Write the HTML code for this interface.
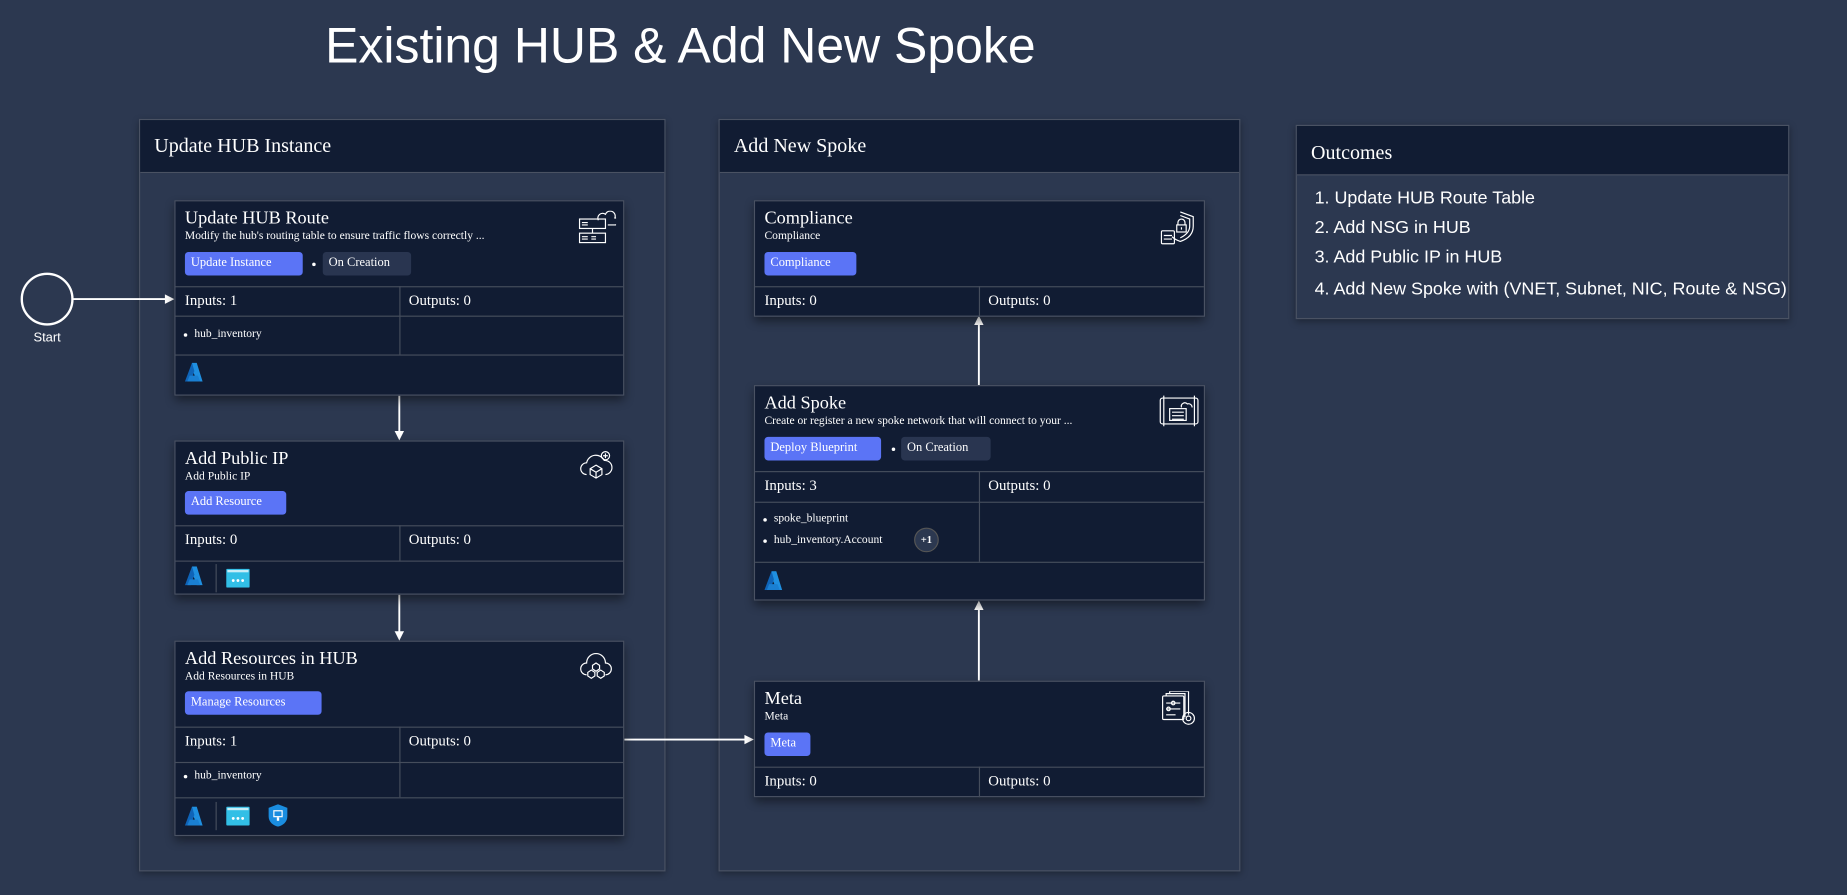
<!DOCTYPE html>
<html><head><meta charset="utf-8"><style>
*{box-sizing:border-box;margin:0;padding:0}
html,body{width:1847px;height:895px;overflow:hidden;background:#2c3850}
#w{position:absolute;left:0;top:0;width:1568px;height:760px;transform:scale(1.17793,1.1776);transform-origin:0 0;font-family:"Liberation Serif",serif;color:#fff}
.abs{position:absolute}
.title{left:276px;top:15px;font:42.4px "Liberation Sans",sans-serif;white-space:nowrap}
.panel{position:absolute;border:1px solid #4a5263;background:#2c3850;box-shadow:0 2px 6px rgba(0,0,0,.35)}
.ph{position:absolute;left:0;right:0;top:0;height:45px;background:#111c33;border-bottom:1px solid #4a5263;font-size:17px;padding:12px 0 0 12px}
.card{position:absolute;background:#111c33;border:1px solid #4a5263;box-shadow:0 4px 8px rgba(0,0,0,.45)}
.ct{position:absolute;left:8px;top:6px;font-size:15.5px;white-space:nowrap}
.cs{position:absolute;left:8px;top:24px;font-size:9.8px;white-space:nowrap}
.btn{position:absolute;height:20px;background:#5b74f6;border-radius:3px;font-size:10.6px;padding:4px 0 0 5px;white-space:nowrap}
.chip{position:absolute;height:20px;background:#293550;border-radius:3px;font-size:10.6px;padding:4px 0 0 5px;white-space:nowrap}
.dot{position:absolute;width:3px;height:3px;border-radius:50%;background:#fff}
.hl{position:absolute;left:0;right:0;height:1px;background:#454d5c}
.vl{position:absolute;width:1px;background:#454d5c}
.lbl{position:absolute;font-size:12.6px;white-space:nowrap}
.li{position:absolute;font-size:9.8px;white-space:nowrap}
.li:before{content:"";position:absolute;left:-9px;top:5px;width:3px;height:3px;border-radius:50%;background:#fff}
.ol{position:absolute;left:1116px;font:15.2px "Liberation Sans",sans-serif;white-space:nowrap}
</style></head><body><div id="w">
<div class="abs title">Existing HUB &amp; Add New Spoke</div>

<div class="panel" style="left:118px;top:101px;width:447px;height:639px"><div class="ph">Update HUB Instance</div></div>
<div class="panel" style="left:610px;top:101px;width:443px;height:639px"><div class="ph">Add New Spoke</div></div>
<div class="panel" style="left:1100px;top:106px;width:419px;height:165px"><div class="ph" style="height:42px;padding-top:13px">Outcomes</div></div>
<div class="ol" style="top:160px">1. Update HUB Route Table</div>
<div class="ol" style="top:185px">2. Add NSG in HUB</div>
<div class="ol" style="top:210px">3. Add Public IP in HUB</div>
<div class="ol" style="top:237px">4. Add New Spoke with (VNET, Subnet, NIC, Route &amp; NSG)</div>

<svg class="abs" style="left:0;top:0" width="1568" height="760">
<circle cx="40" cy="254" r="21.5" fill="none" stroke="#fff" stroke-width="2"/>
<g stroke="#fff" stroke-width="1.6" fill="none">
<line x1="62" y1="254" x2="142" y2="254"/>
<line x1="339" y1="336" x2="339" y2="368"/>
<line x1="339" y1="505" x2="339" y2="538"/>
<line x1="529" y1="628" x2="634" y2="628"/>
<line x1="831" y1="578" x2="831" y2="516"/>
<line x1="831" y1="327" x2="831" y2="274"/>
</g>
<g fill="#fff">
<path d="M148 254 L140 250 L140 258Z"/>
<path d="M339 374 L335 366 L343 366Z"/>
<path d="M339 544 L335 536 L343 536Z"/>
<path d="M640 628 L632 624 L632 632Z"/>
<path d="M831 510 L827 518 L835 518Z"/>
<path d="M831 268 L827 276 L835 276Z"/>
</g>
<text x="40" y="290" fill="#fff" font-family="Liberation Sans,sans-serif" font-size="11" text-anchor="middle">Start</text>
</svg>

<div class="card" style="left:148px;top:170px;width:382px;height:166px">
<div class="ct">Update HUB Route</div><div class="cs">Modify the hub's routing table to ensure traffic flows correctly ...</div>
<div class="btn" style="left:8px;top:43px;width:100px">Update Instance</div>
<div class="dot" style="left:116px;top:52px"></div>
<div class="chip" style="left:125px;top:43px;width:75px">On Creation</div>
<div class="hl" style="top:72px"></div><div class="hl" style="top:97px"></div><div class="hl" style="top:130px"></div>
<div class="vl" style="left:190px;top:72px;height:58px"></div>
<div class="lbl" style="left:8px;top:77px">Inputs: 1</div><div class="lbl" style="left:198px;top:77px">Outputs: 0</div>
<div class="li" style="left:16px;top:107px">hub_inventory</div>
<svg class="abs" style="left:342px;top:8px" width="32" height="30" viewBox="0 0 32 30" fill="none" stroke="#fff" stroke-width="1"><rect x="1" y="7" width="22" height="8"/><rect x="1" y="19" width="22" height="8"/><line x1="12" y1="15" x2="12" y2="19"/><path d="M3 10h5M3 12h5M3 22h5M3 24h5M11 22h4M11 24h4"/><path d="M17 8a4 4 0 0 1 6-5a4 4 0 0 1 8 3a3 3 0 0 1 0 6h-6"/></svg>
<svg class="abs" style="left:8px;top:137px" width="16" height="16" viewBox="0 0 16 16"><path d="M6 0h4L15 16H10L8 10L6 6Z" fill="#1f8fe0"/><path d="M6 0L0 16h5l3-9Z" fill="#0f64b8"/><path d="M4 11h7l2 5H2Z" fill="#1a7fd2"/></svg>
</div>

<div class="card" style="left:148px;top:374px;width:382px;height:131px">
<div class="ct">Add Public IP</div><div class="cs">Add Public IP</div>
<div class="btn" style="left:8px;top:42px;width:86px">Add Resource</div>
<div class="hl" style="top:71px"></div><div class="hl" style="top:101px"></div>
<div class="vl" style="left:190px;top:71px;height:30px"></div>
<div class="lbl" style="left:8px;top:76px">Inputs: 0</div><div class="lbl" style="left:198px;top:76px">Outputs: 0</div>
<svg class="abs" style="left:342px;top:6px" width="30" height="28" viewBox="0 0 30 28" fill="none" stroke="#fff" stroke-width="1"><path d="M7 22a5 5 0 0 1 0-10a8 8 0 0 1 15-2a5 5 0 0 1 1 12"/><circle cx="23" cy="6" r="3.5"/><path d="M23 4v4M21 6h4"/><path d="M15 14l5 3v5l-5 3l-5-3v-5z M10 17l5 3l5-3 M15 20v5"/></svg>
<svg class="abs" style="left:8px;top:106px" width="16" height="16" viewBox="0 0 16 16"><path d="M6 0h4L15 16H10L8 10L6 6Z" fill="#1f8fe0"/><path d="M6 0L0 16h5l3-9Z" fill="#0f64b8"/><path d="M4 11h7l2 5H2Z" fill="#1a7fd2"/></svg>
<div class="vl" style="left:34px;top:104px;height:24px"></div>
<svg class="abs" style="left:43px;top:108px" width="20" height="16" viewBox="0 0 20 16"><rect width="20" height="16" rx="1" fill="#32bfe6"/><rect x="1" y="1" width="18" height="2" fill="#c8eef8"/><circle cx="6" cy="10" r="1.2" fill="#fff"/><circle cx="10" cy="10" r="1.2" fill="#fff"/><circle cx="14" cy="10" r="1.2" fill="#fff"/></svg>
</div>

<div class="card" style="left:148px;top:544px;width:382px;height:166px">
<div class="ct">Add Resources in HUB</div><div class="cs">Add Resources in HUB</div>
<div class="btn" style="left:8px;top:42px;width:116px">Manage Resources</div>
<div class="hl" style="top:72px"></div><div class="hl" style="top:102px"></div><div class="hl" style="top:132px"></div>
<div class="vl" style="left:190px;top:72px;height:60px"></div>
<div class="lbl" style="left:8px;top:77px">Inputs: 1</div><div class="lbl" style="left:198px;top:77px">Outputs: 0</div>
<div class="li" style="left:16px;top:108px">hub_inventory</div>
<svg class="abs" style="left:342px;top:8px" width="30" height="26" viewBox="0 0 30 26" fill="none" stroke="#fff" stroke-width="1"><path d="M7 20a5 5 0 0 1 0-10a8 8 0 0 1 16 0a5 5 0 0 1 0 10"/><path d="M15 10l3 2v3l-3 2l-3-2v-3z M11 16l3 2v3l-3 2l-3-2v-3z M19 16l3 2v3l-3 2l-3-2v-3z"/></svg>
<svg class="abs" style="left:8px;top:140px" width="16" height="16" viewBox="0 0 16 16"><path d="M6 0h4L15 16H10L8 10L6 6Z" fill="#1f8fe0"/><path d="M6 0L0 16h5l3-9Z" fill="#0f64b8"/><path d="M4 11h7l2 5H2Z" fill="#1a7fd2"/></svg>
<div class="vl" style="left:34px;top:136px;height:24px"></div>
<svg class="abs" style="left:43px;top:140px" width="20" height="16" viewBox="0 0 20 16"><rect width="20" height="16" rx="1" fill="#32bfe6"/><rect x="1" y="1" width="18" height="2" fill="#c8eef8"/><circle cx="6" cy="10" r="1.2" fill="#fff"/><circle cx="10" cy="10" r="1.2" fill="#fff"/><circle cx="14" cy="10" r="1.2" fill="#fff"/></svg>
<svg class="abs" style="left:79px;top:138px" width="16" height="19" viewBox="0 0 16 19"><path d="M8 0L16 3v7c0 5-4 8-8 9c-4-1-8-4-8-9V3z" fill="#1a8de0"/><rect x="4" y="5" width="8" height="6" fill="#fff"/><rect x="5" y="6" width="6" height="4" fill="#1a8de0"/><rect x="7" y="11" width="2" height="3" fill="#fff"/></svg>
</div>

<div class="card" style="left:640px;top:170px;width:383px;height:99px">
<div class="ct">Compliance</div><div class="cs">Compliance</div>
<div class="btn" style="left:8px;top:43px;width:78px">Compliance</div>
<div class="hl" style="top:72px"></div>
<div class="vl" style="left:190px;top:72px;height:26px"></div>
<div class="lbl" style="left:8px;top:77px">Inputs: 0</div><div class="lbl" style="left:198px;top:77px">Outputs: 0</div>
<svg class="abs" style="left:343px;top:7px" width="32" height="32" viewBox="0 0 32 32" fill="none" stroke="#fff" stroke-width="1"><path d="M18 2l11 4v8c0 7-5 11-11 13c-3-1-5-2-7-4"/><path d="M18 5l8 3v6c0 5-4 8-8 10"/><rect x="15" y="13" width="8" height="6"/><path d="M16 13v-2a3 3 0 0 1 6 0v2"/><path d="M19 15v2"/><rect x="2" y="18" width="11" height="11" rx="1"/><path d="M4 22h7M4 25h7"/></svg>
</div>

<div class="card" style="left:640px;top:327px;width:383px;height:183px">
<div class="ct">Add Spoke</div><div class="cs">Create or register a new spoke network that will connect to your ...</div>
<div class="btn" style="left:8px;top:43px;width:99px">Deploy Blueprint</div>
<div class="dot" style="left:116px;top:52px"></div>
<div class="chip" style="left:124px;top:43px;width:76px">On Creation</div>
<div class="hl" style="top:72px"></div><div class="hl" style="top:98px"></div><div class="hl" style="top:149px"></div>
<div class="vl" style="left:190px;top:72px;height:77px"></div>
<div class="lbl" style="left:8px;top:77px">Inputs: 3</div><div class="lbl" style="left:198px;top:77px">Outputs: 0</div>
<div class="li" style="left:16px;top:107px">spoke_blueprint</div>
<div class="li" style="left:16px;top:125px">hub_inventory.Account</div>
<div class="abs" style="left:135px;top:120px;width:21px;height:21px;border-radius:50%;background:#2c3850;border:1px solid #555;font-size:9px;font-weight:bold;text-align:center;line-height:19px">+1</div>
<svg class="abs" style="left:343px;top:7px" width="34" height="28" viewBox="0 0 34 28" fill="none" stroke="#fff" stroke-width="1"><rect x="1" y="3" width="32" height="22" rx="2"/><path d="M4 1v26M30 1v26"/><rect x="9" y="12" width="14" height="10"/><path d="M11 15h10M11 18h10M11 21h10"/><path d="M19 11a3 3 0 0 1 5-3a3 3 0 0 1 4 3"/></svg>
<svg class="abs" style="left:8px;top:157px" width="16" height="16" viewBox="0 0 16 16"><path d="M6 0h4L15 16H10L8 10L6 6Z" fill="#1f8fe0"/><path d="M6 0L0 16h5l3-9Z" fill="#0f64b8"/><path d="M4 11h7l2 5H2Z" fill="#1a7fd2"/></svg>
</div>

<div class="card" style="left:640px;top:578px;width:383px;height:99px">
<div class="ct">Meta</div><div class="cs">Meta</div>
<div class="btn" style="left:8px;top:43px;width:39px">Meta</div>
<div class="hl" style="top:72px"></div>
<div class="vl" style="left:190px;top:72px;height:26px"></div>
<div class="lbl" style="left:8px;top:77px">Inputs: 0</div><div class="lbl" style="left:198px;top:77px">Outputs: 0</div>
<svg class="abs" style="left:345px;top:8px" width="30" height="30" viewBox="0 0 30 30" fill="none" stroke="#fff" stroke-width="1"><rect x="1" y="4" width="18" height="20" rx="1"/><path d="M4 4V2h16v20M7 2V0h16v20"/><path d="M4 10h12M4 15h12M4 20h8"/><circle cx="10" cy="10" r="1.5"/><circle cx="6" cy="15" r="1.5"/><circle cx="23" cy="23" r="5"/><circle cx="23" cy="23" r="2"/></svg>
</div>

</div></body></html>
